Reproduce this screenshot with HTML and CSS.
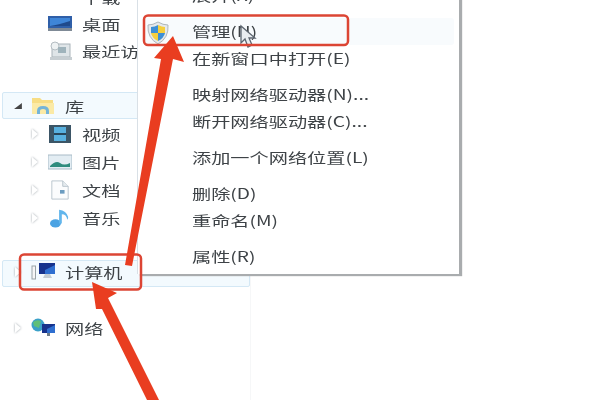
FILE: index.html
```html
<!DOCTYPE html>
<html lang="zh-CN">
<head>
<meta charset="utf-8">
<title>计算机右键菜单</title>
<link rel="stylesheet" href="styles.css">
</head>
<body>
<div class="scene">
  <nav class="tree">
    <div class="row top-row">
      <span class="caret"></span>
      <svg class="icon" viewBox="0 0 24 20"><path d="M3 2l8-2 9 4-2 7-9 1-6-3z" fill="#e6b53a"/><path d="M11 4l9 0-2 7-7 1z" fill="#4d9bd4"/></svg>
      <span class="label">下载</span>
    </div>
    <div class="row">
      <span class="caret"></span>
      <svg class="icon" viewBox="0 0 24 20"><rect x="0" y="2" width="24" height="14" fill="#2f5fa8"/><rect x="2" y="4" width="20" height="8" fill="#3f86d8"/><rect x="0" y="14" width="24" height="3" fill="#7f8a96"/><path d="M2 12q8-1 20-5v5z" fill="#1f4a8c"/></svg>
      <span class="label">桌面</span>
    </div>
    <div class="row">
      <span class="caret"></span>
      <svg class="icon" viewBox="0 0 24 20"><rect x="4" y="3" width="18" height="13" fill="#dfe5e8" stroke="#aab4ba"/><circle cx="7" cy="5" r="4" fill="#eef2f3" stroke="#b4bdc2"/><rect x="10" y="6" width="8" height="6" fill="#9fb3bb"/><rect x="2" y="16" width="22" height="3" fill="#c7ced2"/></svg>
      <span class="label">最近访问</span>
    </div>

    <div class="row selected lib-row">
      <span class="caret open"></span>
      <svg class="icon" viewBox="0 0 24 20"><path d="M1 2h8l2 2h11v14H1z" fill="#f7dd84"/><path d="M1 7h22v11H1z" fill="#fbeaa6"/><path d="M6 18v-3q0-5 6-5t6 5v3h-3v-3q0-2-3-2t-3 2v3z" fill="#74b4d8"/></svg>
      <span class="label">库</span>
    </div>
    <div class="row indent first-indent">
      <span class="caret"></span>
      <svg class="icon" viewBox="0 0 24 20"><rect x="1" y="1" width="22" height="18" fill="#3b5566"/><rect x="6" y="3" width="12" height="14" fill="#58b0de"/><path d="M6 10h12" stroke="#27465a" stroke-width="2"/></svg>
      <span class="label">视频</span>
    </div>
    <div class="row indent">
      <span class="caret"></span>
      <svg class="icon" viewBox="0 0 24 20"><rect x="0" y="3" width="24" height="14" fill="#e3edf3" stroke="#a9bcc8"/><path d="M2 14q6-6 10-3t10 0v4H2z" fill="#2f8c7e"/></svg>
      <span class="label">图片</span>
    </div>
    <div class="row indent">
      <span class="caret"></span>
      <svg class="icon" viewBox="0 0 24 22"><path d="M3 1h12l6 6v14H3z" fill="#fbfcfd" stroke="#b6c2cb"/><path d="M15 1v6h6" fill="#e5ebef" stroke="#b6c2cb"/><rect x="12" y="11" width="5" height="4" fill="#6c9cc0"/></svg>
      <span class="label">文档</span>
    </div>
    <div class="row indent">
      <span class="caret"></span>
      <svg class="icon" viewBox="0 0 24 22"><ellipse cx="7" cy="17" rx="6" ry="4.5" fill="#4ba3e3"/><path d="M11 17V2q8 1 10 8 0 2-1 3-1-6-6-6v10z" fill="#62b6ec"/></svg>
      <span class="label">音乐</span>
    </div>

    <div class="row selected wide pc-row">
      <span class="caret"></span>
      <svg class="icon pc-icon" viewBox="0 0 25 20"><rect x="1" y="4" width="3.5" height="13" fill="#f6f6f6" stroke="#9aa4a8"/><rect x="8" y="1" width="16" height="11" fill="#16328c"/><path d="M14 8l10-5v9H14z" fill="#2f6fd0"/><path d="M14 12h5l2 4H12z" fill="#c3ccd3"/></svg>
      <span class="label">计算机</span>
    </div>
    <div class="row net-row">
      <span class="caret"></span>
      <svg class="icon pc-icon" viewBox="0 0 25 20"><circle cx="7" cy="7" r="6.5" fill="#3aa0c8"/><path d="M2 4q4-3 8-1l-2 7-5-2z" fill="#5fbf78"/><rect x="11" y="6" width="13" height="9" fill="#16328c"/><path d="M16 11l8-4v8h-8z" fill="#2f6fd0"/><path d="M16 15h3v3h-3z" fill="#6c7a88"/></svg>
      <span class="label">网络</span>
    </div>
  </nav>

  <div class="menu">
    <div class="item"><span class="label">展开(X)</span></div>
    <div class="group">
      <div class="item hover">
        <svg class="shield" viewBox="0 0 22 24"><path d="M11 1q5 3 10 3 1 13-10 19Q0 17 1 4q5 0 10-3z" fill="#e5e9ec" stroke="#aeb6bb"/><path d="M11 4v8H4q0-4 0-6 4 0 7-2z" fill="#3d8fd6"/><path d="M11 4q4 2 7 2v6h-7z" fill="#f5cf3e"/><path d="M4 12h7v8q-6-3-7-8z" fill="#f5cf3e"/><path d="M11 12h7q-1 5-7 8z" fill="#3d8fd6"/></svg>
        <span class="label">管理(N)</span>
      </div>
      <div class="item"><span class="label">在新窗口中打开(E)</span></div>
    </div>
    <div class="group">
      <div class="item"><span class="label">映射网络驱动器(N)...</span></div>
      <div class="item"><span class="label">断开网络驱动器(C)...</span></div>
    </div>
    <div class="group">
      <div class="item"><span class="label">添加一个网络位置(L)</span></div>
    </div>
    <div class="group">
      <div class="item"><span class="label">删除(D)</span></div>
      <div class="item"><span class="label">重命名(M)</span></div>
    </div>
    <div class="group">
      <div class="item"><span class="label">属性(R)</span></div>
    </div>
  </div>

  <svg class="marks" viewBox="0 0 600 400">
    <path d="M241 26v17l4-4 3 8 4-2-3-7h6z" fill="#e9edf0" stroke="#5d6670" stroke-width="1.3"/>
    <rect x="144" y="15.5" width="204" height="29.5" rx="4" class="box"/>
    <rect x="20" y="254.5" width="121" height="35" rx="4" class="box"/>
    <path d="M173 36 184 62 173 59 132 266 125 265 161 59 154 58Z" class="arrow"/>
    <path d="M92 282 117 293 108 298 159 400 147 400 102 309 96 309Z" class="arrow"/>
  </svg>
</div>
</body>
</html>
```
FILE: styles.css
```css
html, body {
  margin: 0;
  padding: 0;
  background: #fff;
  overflow: hidden;
}
.scene {
  position: relative;
  width: 600px;
  height: 400px;
  overflow: hidden;
  background: #fff;
  filter: blur(0.7px);
  font-family: "Noto Sans CJK SC", "Liberation Sans", sans-serif;
  color: #3e4347;
}
.label {
  display: inline-block;
  white-space: nowrap;
  font-size: 14px;
  font-weight: 400;
  line-height: 20px;
  transform: scaleX(1.37);
  transform-origin: left center;
}
.tree {
  width: 250px;
  height: 420px;
  margin-top: -17px;
  border-right: 1px solid #f6f7f8;
  display: flex;
  flex-direction: column;
}
.row {
  display: flex;
  align-items: center;
  height: 27px;
  flex: none;
  box-sizing: border-box;
  padding-left: 45px;
  border: 1px solid transparent;
  border-radius: 2px;
  margin-left: 2px;
}
.row .caret { display: none; }
.indent .caret, .selected .caret, .net-row .caret {
  display: block;
  width: 0;
  height: 0;
  flex: none;
  border-left: 6px solid #fff;
  border-top: 5px solid transparent;
  border-bottom: 5px solid transparent;
  margin-left: -16px;
  margin-right: 10px;
  filter: drop-shadow(0 0 1px #9aa2a8);
}
.caret.open {
  border-left: 6px solid transparent !important;
  border-top: 0 !important;
  border-bottom: 6px solid #444 !important;
  filter: none !important;
  transform: scaleX(1.3);
}
.icon { width: 24px; height: 20px; flex: none; margin-right: 10px; }
.selected {
  background: #f3fafe;
  border-color: #d4e8f5;
}
.lib-row { margin-top: 28px; padding-left: 28px; width: 250px; }
.indent { height: 28px; }
.first-indent { margin-top: 1px; }
.pc-row { margin-top: 28px; padding-left: 28px; padding-bottom: 3px; width: 248px; }
.net-row { margin-top: 27px; padding-left: 28px; }
.pc-icon { width: 25px; margin-right: 9px; }

.menu {
  position: absolute;
  left: 137px;
  top: -21px;
  width: 322px;
  box-sizing: border-box;
  padding: 2.5px 5px 4.5px;
  background: #fff;
  border-left: 1px solid #d9e0e6;
  box-shadow: 3px 2px 1px #a9acae;
}
.group { margin-top: 9px; }
.item {
  display: flex;
  align-items: center;
  height: 27px;
  padding-left: 49px;
}
.item.hover {
  position: relative;
  background: #f8fbfd;
  border-radius: 3px;
}
.shield {
  position: absolute;
  left: 4px;
  top: 3px;
  width: 22px;
  height: 24px;
}
.marks {
  position: absolute;
  left: 0;
  top: 0;
  width: 600px;
  height: 400px;
}
.box {
  fill: none;
  stroke: #dc4534;
  stroke-width: 2.5;
}
.arrow { fill: #e93d20; }
```
